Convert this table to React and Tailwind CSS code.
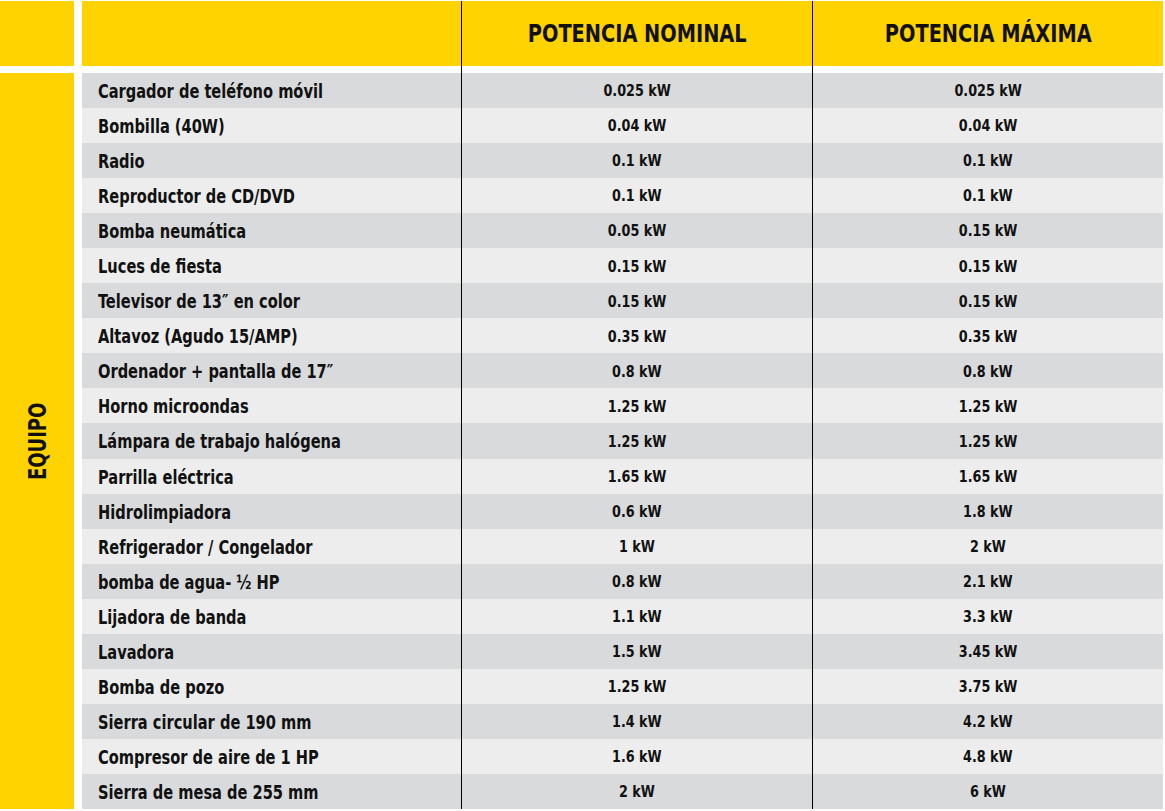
import React from "react";

const rows = [
  ["Cargador de teléfono móvil", "0.025 kW", "0.025 kW"],
  ["Bombilla (40W)", "0.04 kW", "0.04 kW"],
  ["Radio", "0.1 kW", "0.1 kW"],
  ["Reproductor de CD/DVD", "0.1 kW", "0.1 kW"],
  ["Bomba neumática", "0.05 kW", "0.15 kW"],
  ["Luces de fiesta", "0.15 kW", "0.15 kW"],
  ["Televisor de 13″ en color", "0.15 kW", "0.15 kW"],
  ["Altavoz (Agudo 15/AMP)", "0.35 kW", "0.35 kW"],
  ["Ordenador + pantalla de 17″", "0.8 kW", "0.8 kW"],
  ["Horno microondas", "1.25 kW", "1.25 kW"],
  ["Lámpara de trabajo halógena", "1.25 kW", "1.25 kW"],
  ["Parrilla eléctrica", "1.65 kW", "1.65 kW"],
  ["Hidrolimpiadora", "0.6 kW", "1.8 kW"],
  ["Refrigerador / Congelador", "1 kW", "2 kW"],
  ["bomba de agua- ½ HP", "0.8 kW", "2.1 kW"],
  ["Lijadora de banda", "1.1 kW", "3.3 kW"],
  ["Lavadora", "1.5 kW", "3.45 kW"],
  ["Bomba de pozo", "1.25 kW", "3.75 kW"],
  ["Sierra circular de 190 mm", "1.4 kW", "4.2 kW"],
  ["Compresor de aire de 1 HP", "1.6 kW", "4.8 kW"],
  ["Sierra de mesa de 255 mm", "2 kW", "6 kW"],
];

const font = "font-['Liberation_Sans_Narrow','DejaVu_Sans_Condensed','Liberation_Sans',sans-serif]";

export default function App() {
  return (
    <div className={`w-[1165px] h-[811px] bg-white flex pt-px text-[#111] ${font}`}>
      <div className="w-[74px] flex flex-col">
        <div className="h-[65px] bg-[#ffd300]" />
        <div className="h-[7px]" />
        <div className="h-[736px] bg-[#ffd300] flex items-center justify-center">
          <span className="[writing-mode:vertical-rl] rotate-180 scale-y-[0.8] font-bold text-[25px] leading-none">
            EQUIPO
          </span>
        </div>
      </div>
      <div className="ml-2 w-[1081px] flex flex-col">
        <div className="grid grid-cols-[379px_351px_351px] h-[65px] bg-[#ffd300]">
          <div />
          <div className="border-l border-black flex items-center justify-center font-bold text-[25px] leading-none">
            <span className="scale-x-[0.86] whitespace-nowrap">POTENCIA NOMINAL</span>
          </div>
          <div className="border-l border-black flex items-center justify-center font-bold text-[25px] leading-none">
            <span className="scale-x-[0.86] whitespace-nowrap">POTENCIA MÁXIMA</span>
          </div>
        </div>
        <div className="grid grid-cols-[379px_351px_351px] h-[7px]">
          <div />
          <div className="border-l border-black" />
          <div className="border-l border-black" />
        </div>
        {rows.map((r, i) => (
          <div
            key={i}
            className={`grid grid-cols-[379px_351px_351px] h-[35.05px] ${i % 2 === 0 ? "bg-[#d9dadb]" : "bg-[#ecedec]"}`}
          >
            <div className="pl-4 pt-[2px] flex items-center font-bold text-[19px] leading-none">
              <span className="origin-left scale-x-[0.855] whitespace-nowrap">{r[0]}</span>
            </div>
            <div className="border-l border-black pt-[2px] flex items-center justify-center font-bold text-[16.5px] leading-none">
              <span className="scale-x-[0.86] whitespace-nowrap">{r[1]}</span>
            </div>
            <div className="border-l border-black pt-[2px] flex items-center justify-center font-bold text-[16.5px] leading-none">
              <span className="scale-x-[0.86] whitespace-nowrap">{r[2]}</span>
            </div>
          </div>
        ))}
      </div>
    </div>
  );
}
